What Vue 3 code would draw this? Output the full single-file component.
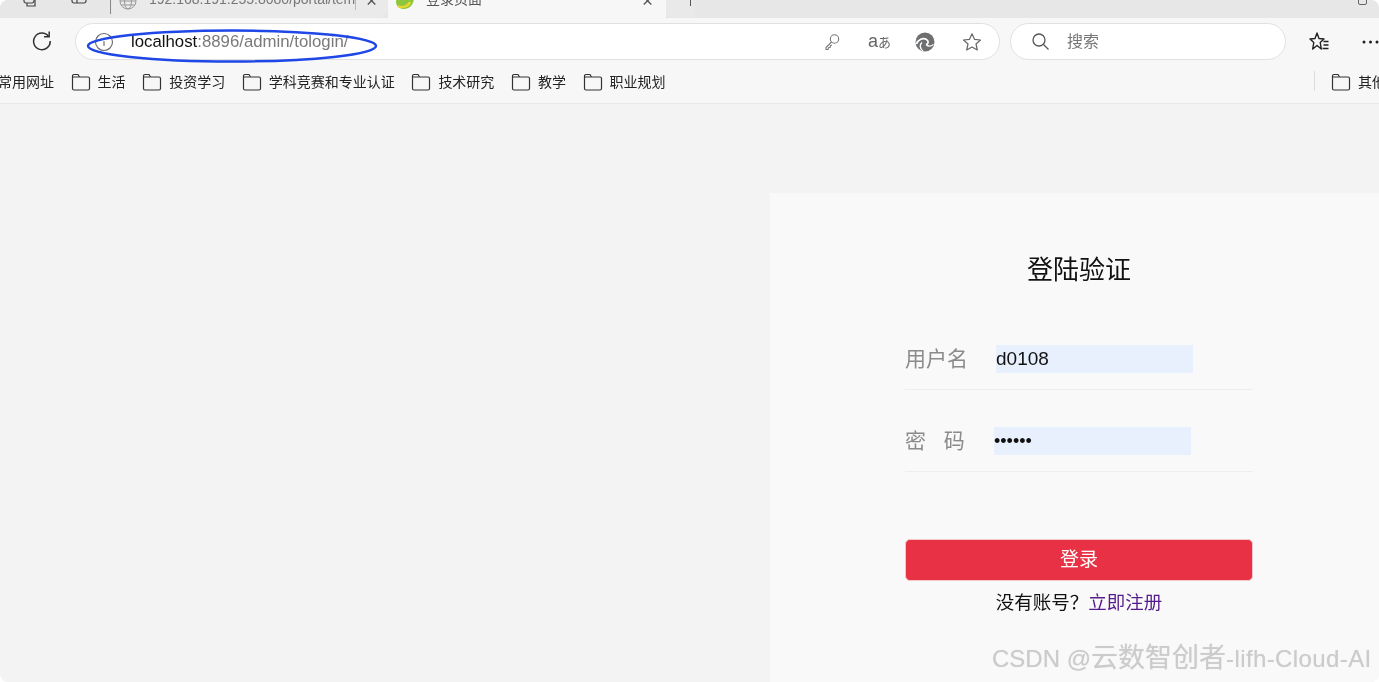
<script setup>
const bookmarks = ['生活', '投资学习', '学科竞赛和专业认证', '技术研究', '教学', '职业规划']
</script>

<template>
  <div class="page">
    <div class="tabstrip">
      <div class="strip-left">
        <svg class="ic-win" width="18" height="18" viewBox="0 0 18 18" fill="none" stroke="#444" stroke-width="1.2"><rect x="3" y="-4" width="10" height="11" rx="2"/><path d="M6 7v3h8V0"/></svg>
        <svg class="ic-tabs" width="18" height="18" viewBox="0 0 18 18" fill="none" stroke="#444" stroke-width="1.2"><rect x="2" y="-4" width="14" height="11" rx="2"/><path d="M7 -4v11"/></svg>
        <span class="strip-sep"></span>
      </div>
      <div class="tab tab-idle">
        <svg class="globe" width="18" height="18" viewBox="0 0 18 18" fill="none" stroke="#999" stroke-width="1"><circle cx="9" cy="3" r="8"/><ellipse cx="9" cy="3" rx="3.5" ry="8"/><path d="M1 3h16M2 7h14"/></svg>
        <span class="tab-title">192.168.191.255:8080/portal/tem</span>
        <span class="tab-div"></span>
        <span class="tab-x">×</span>
      </div>
      <div class="tab tab-active">
        <svg class="leaf" width="22" height="12" viewBox="0 0 22 12"><path d="M2 1C3 -3 18 -5 20 -3 20 4 16 9 10 9 6 9 2 7 2 1Z" fill="#8cc63f"/><path d="M4 6c4 2 10 1 12-4" stroke="#e6d62e" stroke-width="2.500" fill="none"/></svg>
        <span class="tab-title dark">登录页面</span>
        <span class="tab-x">×</span>
      </div>
      <div class="tab-new"><span class="plus"></span></div>
      <span class="win-restore"></span>
    </div>

    <div class="toolbar">
      <svg class="reload" width="22" height="22" viewBox="0 0 22 22" fill="none" stroke="#333" stroke-width="1.5"><path d="M17.6 7.5A8.3 8.3 0 1 0 19.2 12"/><path d="M18.2 2.6v5.2H13"/></svg>
      <div class="address">
        <svg class="info" width="20" height="20" viewBox="0 0 20 20" fill="none" stroke="#666" stroke-width="1.1"><circle cx="10" cy="10" r="8.5"/><path d="M10 9v5M10 6v1.4"/></svg>
        <span class="url"><span class="host">localhost</span>:8896/admin/tologin/</span>
        <div class="addr-icons">
          <svg width="18" height="18" viewBox="0 0 18 18" fill="none" stroke="#777" stroke-width="1.1"><circle cx="11.5" cy="6" r="4.2"/><path d="M8.5 9 3 14.5V16.5H5L5.6 14.6 7.2 14.2 7.5 12.6 9 12"/></svg>
          <span class="read">a<span class="read-kana">あ</span></span>
          <svg width="20" height="20" viewBox="0 0 20 20" fill="none"><circle cx="10" cy="10" r="9.500" fill="#6e6f71"/><path d="M1.500 12C3 7.500 8 5.500 11.500 7.500 14 9 13.500 12 11 12.500" stroke="#fff" stroke-width="1.700"/><path d="M8 19C4.500 16.500 4.500 12.500 7 10.500" stroke="#fff" stroke-width="1.500"/><path d="M11 12.500c2 2 5 2 7.500 0" stroke="#fff" stroke-width="1.200"/></svg>
          <svg width="20" height="20" viewBox="0 0 20 20" fill="none" stroke="#666" stroke-width="1.2" stroke-linejoin="round"><path d="M10 1.800 12.500 7.300 18.500 8 14 12 15.300 18 10 15 4.700 18 6 12 1.500 8 7.500 7.300Z"/></svg>
        </div>
      </div>
      <div class="search">
        <svg width="19" height="19" viewBox="0 0 19 19" fill="none" stroke="#555" stroke-width="1.3"><circle cx="8" cy="8" r="6"/><path d="m12.500 12.500 5 5"/></svg>
        <span class="search-text">搜索</span>
      </div>
      <svg class="favs" width="22" height="22" viewBox="0 0 22 22" fill="none" stroke="#222" stroke-width="1.4" stroke-linejoin="round"><path d="M9 2 11 7.500 16 8 12.200 11.500 13.300 18 9 14.500 4.700 18 5.800 11.500 2 8 7 7.500Z"/><path d="M15.500 10.500h5M15.500 14h5M14.500 17.500h6"/></svg>
      <svg class="more" width="17" height="4" viewBox="0 0 17 4" fill="#222"><circle cx="2" cy="2" r="1.500"/><circle cx="8.500" cy="2" r="1.500"/><circle cx="15" cy="2" r="1.500"/></svg>
    </div>

    <div class="bookmarks">
      <span class="bm-first">常用网址</span>
      <span v-for="b in bookmarks" :key="b" class="bm">
        <svg class="folder" width="20" height="18" viewBox="0 0 20 18" fill="none" stroke="#333" stroke-width="1.2"><path d="M1.500 15.500V3a1.500 1.500 0 0 1 1.500-1.500h4L8.500 4H17a1.500 1.500 0 0 1 1.500 1.500v10A1.500 1.500 0 0 1 17 17H3a1.500 1.500 0 0 1-1.500-1.500Z"/><path d="M1.500 4H8"/></svg>
        {{ b }}
      </span>
      <span class="bm-spacer"></span>
      <span class="bm-sep"></span>
      <span class="bm bm-other">
        <svg class="folder" width="20" height="18" viewBox="0 0 20 18" fill="none" stroke="#333" stroke-width="1.2"><path d="M1.500 15.500V3a1.500 1.500 0 0 1 1.500-1.500h4L8.500 4H17a1.500 1.500 0 0 1 1.500 1.500v10A1.500 1.500 0 0 1 17 17H3a1.500 1.500 0 0 1-1.500-1.500Z"/><path d="M1.500 4H8"/></svg>
        其他
      </span>
    </div>

    <div class="content">
      <section class="panel">
        <h1 class="title">登陆验证</h1>
        <div class="field field-user">
          <span class="label">用户名</span>
          <span class="value">d0108</span>
        </div>
        <div class="field field-pass">
          <span class="label spaced">密 码</span>
          <span class="value dots">••••••</span>
        </div>
        <button class="submit">登录</button>
        <p class="reg">没有账号？<a class="link">立即注册</a></p>
      </section>
    </div>

    <svg class="ellipse" width="296" height="38" viewBox="0 0 296 38" fill="none"><ellipse cx="148" cy="19" rx="144" ry="15.500" stroke="#1f46e6" stroke-width="2.500"/></svg>
    <span class="watermark">CSDN @<span class="wm-cjk">云数智创者</span><span class="wm-tail">-lifh-Cloud-AI</span></span>
  </div>
</template>

<style>
html, body { margin: 0; padding: 0; background: #fff; overflow: hidden; }
</style>

<style scoped>
.page {
  position: relative;
  width: 1379px;
  height: 682px;
  overflow: hidden;
  border-radius: 8px;
  display: flex;
  flex-direction: column;
  background: #f3f3f3;
  font-family: "Liberation Sans", "Noto Sans CJK SC", sans-serif;
  color: #222;
  filter: blur(0.35px);
}
.tabstrip {
  height: 18px;
  flex: none;
  background: #e7e7e7;
  display: flex;
  align-items: stretch;
  overflow: hidden;
  position: relative;
}
.strip-left { width: 112px; flex: none; position: relative; display: flex; }
.ic-win { margin-left: 21px; margin-top: -4px; }
.ic-tabs { margin-left: 31px; margin-top: -4px; }
.strip-sep { width: 1px; height: 14px; background: #888; margin-left: 22px; }
.tab { position: relative; display: flex; align-items: center; font-size: 14px; overflow: hidden; }
.tab-idle { width: 276px; background: #eaeaea; border-bottom-right-radius: 10px; }
.tab-active { width: 278px; background: #f7f7f7; }
.globe { position: absolute; left: 7px; top: -2px; }
.leaf { position: absolute; left: 6px; top: 0; }
.tab-title { position: absolute; top: -9px; line-height: 16px; white-space: nowrap; color: #777; }
.tab-idle .tab-title { left: 37px; width: 206px; overflow: hidden; }
.tab-active .tab-title { left: 38px; color: #555; }
.tab-div { position: absolute; left: 243px; top: 0; width: 1px; height: 10px; background: #bbb; }
.tab-x { position: absolute; top: -9px; font-size: 19px; line-height: 19px; color: #555; }
.tab-idle .tab-x { left: 254px; }
.tab-active .tab-x { left: 254px; }
.tab-new { width: 29px; background: #e9e9e9; border-bottom-left-radius: 8px; position: relative; }
.plus { position: absolute; left: 24px; top: 0; width: 1px; height: 6px; background: #555; }
.win-restore { position: absolute; right: 12px; top: -4px; width: 7px; height: 7px; border: 1px solid #666; border-radius: 2px; }

.toolbar {
  height: 47px;
  flex: none;
  background: #f7f7f7;
  display: flex;
  align-items: center;
  position: relative;
}
.reload { margin-left: 31px; margin-top: -3px; flex: none; }
.address {
  margin-left: 22px;
  width: 925px;
  height: 37px;
  flex: none;
  box-sizing: border-box;
  background: #fff;
  border: 1.5px solid #e0e0e0;
  border-radius: 19px;
  display: flex;
  align-items: center;
}
.info { margin-left: 18px; flex: none; }
.url { margin-left: 17px; font-size: 16.800px; color: #7a7a7a; white-space: nowrap; }
.host { color: #111; }
.addr-icons { margin-left: auto; margin-right: 17px; display: flex; align-items: center; gap: 27px; }
.read { font-size: 18px; color: #666; width: 20px; white-space: nowrap; line-height: 20px; }
.read-kana { font-size: 13px; }
.search {
  margin-left: 10px;
  width: 276px;
  height: 37px;
  flex: none;
  box-sizing: border-box;
  background: #fff;
  border: 1.5px solid #e0e0e0;
  border-radius: 19px;
  display: flex;
  align-items: center;
  padding-left: 20px;
}
.search-text { margin-left: 17px; font-size: 16px; line-height: 20px; color: #777; }
.favs { margin-left: 22px; flex: none; }
.more { margin-left: 32px; flex: none; }

.bookmarks {
  height: 39px;
  flex: none;
  box-sizing: border-box;
  background: #f7f7f7;
  border-bottom: 1px solid #e9e9e9;
  padding-bottom: 6px;
  display: flex;
  align-items: center;
  font-size: 14px;
  color: #222;
  white-space: nowrap;
}
.bm-first { margin-left: -2px; margin-right: 16.600px; }
.bm { display: inline-flex; align-items: center; gap: 7px; margin-right: 16.600px; }
.folder { margin-top: 1px; }
.bm-spacer { flex: 1; }
.bm-sep { width: 1px; height: 20px; background: #ddd; margin-right: 16px; flex: none; }
.bm-other { margin-right: -7px; flex: none; }

.content { flex: 1; display: flex; justify-content: flex-end; padding-top: 89px; }
.panel {
  width: 609px;
  background: #f9f9f9;
  box-sizing: border-box;
  padding: 59px 126px 0 135px;
  display: flex;
  flex-direction: column;
}
.title {
  margin: 0 0 57px;
  font-size: 26px;
  line-height: 36px;
  font-weight: 400;
  color: #111;
  text-align: center;
}
.field {
  height: 45px;
  box-sizing: border-box;
  border-bottom: 1px solid #eeeeee;
  display: flex;
  align-items: flex-start;
  margin-bottom: 37px;
}
.label { width: 91px; flex: none; font-size: 21px; line-height: 28px; color: #8b8b8b; white-space: nowrap; }
.spaced { width: 89px; word-spacing: 12px; }
.value {
  width: 197px;
  height: 28px;
  box-sizing: border-box;
  background: #e8f0fe;
  font-size: 19px;
  line-height: 28px;
  color: #111;
}
.dots { font-size: 18px; }
.submit {
  margin-top: 30px;
  height: 42px;
  border: 1px solid #f0c5cb;
  border-radius: 5px;
  background: #e83144;
  color: #fff;
  font: inherit;
  font-size: 19px;
  line-height: 36px;
  padding: 0;
}
.reg { margin: 10px 0 0; text-align: center; font-size: 18.500px; line-height: 24px; color: #111; }
.link { color: #551a8b; }

.ellipse { position: absolute; left: 84px; top: 27px; }
.watermark {
  position: absolute;
  left: 992px;
  top: 641px;
  font-size: 24px;
  line-height: 34px;
  color: #cbcbcb;
  white-space: nowrap;
  text-shadow: 0 0 1px #ddd;
}
.wm-cjk { font-size: 27px; }
.wm-tail { letter-spacing: 0.400px; }
</style>
